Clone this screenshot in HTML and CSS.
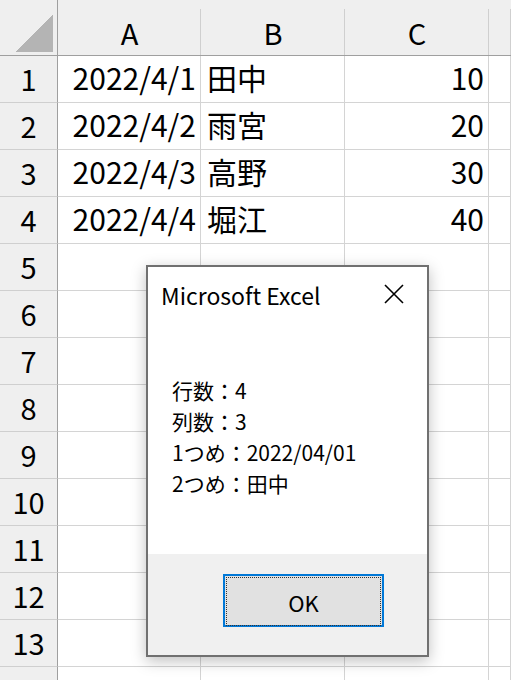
FILE: index.html
```html
<!DOCTYPE html>
<html lang="ja">
<head>
    <meta charset="UTF-8">
    <title>Microsoft Excel</title>
    <link rel="stylesheet" href="styles.css">
</head>
<body>
    <div class="sheet">
        <div class="corner"><div class="triangle"></div></div>
        <div class="col-head">A</div>
        <div class="col-head">B</div>
        <div class="col-head">C</div>
        <div class="col-head"></div>

        <div class="row-head">1</div>
        <div class="cell num">2022/4/1</div>
        <div class="cell">田中</div>
        <div class="cell num">10</div>
        <div class="cell"></div>

        <div class="row-head">2</div>
        <div class="cell num">2022/4/2</div>
        <div class="cell">雨宮</div>
        <div class="cell num">20</div>
        <div class="cell"></div>

        <div class="row-head">3</div>
        <div class="cell num">2022/4/3</div>
        <div class="cell">高野</div>
        <div class="cell num">30</div>
        <div class="cell"></div>

        <div class="row-head">4</div>
        <div class="cell num">2022/4/4</div>
        <div class="cell">堀江</div>
        <div class="cell num">40</div>
        <div class="cell"></div>

        <div class="row-head">5</div><div class="cell"></div><div class="cell"></div><div class="cell"></div><div class="cell"></div>
        <div class="row-head">6</div><div class="cell"></div><div class="cell"></div><div class="cell"></div><div class="cell"></div>
        <div class="row-head">7</div><div class="cell"></div><div class="cell"></div><div class="cell"></div><div class="cell"></div>
        <div class="row-head">8</div><div class="cell"></div><div class="cell"></div><div class="cell"></div><div class="cell"></div>
        <div class="row-head">9</div><div class="cell"></div><div class="cell"></div><div class="cell"></div><div class="cell"></div>
        <div class="row-head">10</div><div class="cell"></div><div class="cell"></div><div class="cell"></div><div class="cell"></div>
        <div class="row-head">11</div><div class="cell"></div><div class="cell"></div><div class="cell"></div><div class="cell"></div>
        <div class="row-head">12</div><div class="cell"></div><div class="cell"></div><div class="cell"></div><div class="cell"></div>
        <div class="row-head">13</div><div class="cell"></div><div class="cell"></div><div class="cell"></div><div class="cell"></div>
        <div class="row-head">14</div><div class="cell"></div><div class="cell"></div><div class="cell"></div><div class="cell"></div>
    </div>

    <div class="dialog">
        <div class="dialog-body">
            <div class="dialog-title">
                <span>Microsoft Excel</span>
                <svg class="close" width="20" height="20" viewBox="0 0 20 20">
                    <path d="M1 1 L19 19 M19 1 L1 19" stroke="#000" stroke-width="1.6" fill="none"/>
                </svg>
            </div>
            <div class="message">
                <div>行数：4</div>
                <div>列数：3</div>
                <div>1つめ：2022/04/01</div>
                <div>2つめ：田中</div>
            </div>
        </div>
        <div class="dialog-footer">
            <button class="ok-btn"><span>OK</span></button>
        </div>
    </div>
</body>
</html>
```

FILE: styles.css
```css
body {
    margin: 0;
    padding: 0;
    background-color: #ffffff;
    font-family: "Noto Sans CJK JP", "Noto Sans", sans-serif;
    color: #000;
    overflow: hidden;
}
.sheet {
    display: grid;
    grid-template-columns: 58px 143px 144px 144px 1fr;
    grid-template-rows: 56px;
    grid-auto-rows: 47px;
    width: 511px;
    height: 680px;
    font-size: 30px;
}
.corner {
    background-color: #efefef;
    border-right: 1px solid #9f9f9f;
    border-bottom: 1px solid #9f9f9f;
    padding: 14px 4px 3px 15px;
}
.triangle {
    width: 38px;
    height: 38px;
    background: linear-gradient(to bottom right, transparent 50%, #b4b4b4 50%);
}
.col-head {
    background: linear-gradient(#cfcfcf, #cfcfcf) right 9px / 1px 100% no-repeat, #efefef;
    border-bottom: 1px solid #9f9f9f;
    display: flex;
    align-items: center;
    justify-content: center;
    font-size: 29px;
    padding-top: 8px;
}
.row-head {
    background-color: #efefef;
    border-right: 1px solid #9f9f9f;
    border-bottom: 1px solid #cfcfcf;
    display: flex;
    align-items: center;
    justify-content: center;
    font-size: 29px;
    padding-bottom: 3px;
}
.cell {
    border-right: 1px solid #d4d4d4;
    border-bottom: 1px solid #d4d4d4;
    display: flex;
    align-items: center;
    padding: 0 6px 4px;
    white-space: nowrap;
}
.cell.num {
    justify-content: flex-end;
    padding-right: 4px;
}

.dialog {
    position: absolute;
    left: 146px;
    top: 265px;
    width: 279px;
    height: 388px;
    border: 2px solid #707070;
    background-color: #f0f0f0;
    box-shadow: 0 4px 14px rgba(0, 0, 0, 0.25);
    display: flex;
    flex-direction: column;
    font-size: 21px;
}
.dialog-body {
    background-color: #ffffff;
    height: 287px;
    padding: 0 0 0 13px;
}
.dialog-title {
    display: flex;
    justify-content: space-between;
    align-items: center;
    height: 56px;
    padding-right: 23px;
    font-size: 23px;
}
.close {
    display: block;
    margin-top: -3px;
}
.message {
    padding-left: 11px;
    padding-top: 52px;
    line-height: 31px;
}
.dialog-footer {
    flex: 1;
    display: flex;
    justify-content: center;
    padding-top: 20px;
    padding-left: 32px;
}
.ok-btn {
    width: 161px;
    height: 53px;
    border: 2px solid #0078d7;
    background-color: #e1e1e1;
    padding: 1px;
    font-family: "Noto Sans CJK JP", "Noto Sans", sans-serif;
    font-size: 22px;
    color: #000;
}
.ok-btn span {
    display: flex;
    align-items: center;
    justify-content: center;
    height: 100%;
    border: 1px dotted #333;
}
```
